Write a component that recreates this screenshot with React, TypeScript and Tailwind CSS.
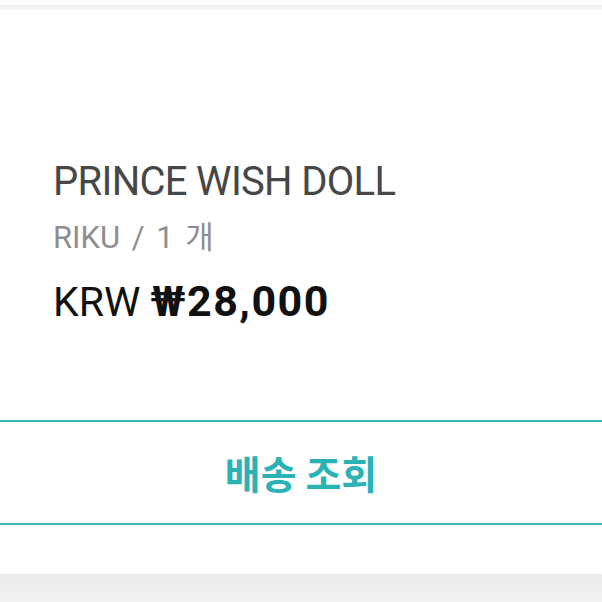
export default function App() {
  const font = { fontFamily: 'Roboto, "Noto Sans CJK KR", sans-serif' };
  return (
    <div className="w-[602px] h-[602px] flex flex-col bg-white overflow-hidden" style={font}>
      <div className="h-[5px] shrink-0 bg-[#fdfdfd]" />
      <div className="h-[5px] shrink-0 bg-gradient-to-b from-[#efeff0] to-[#f7f7f8]" />
      <div className="h-[410px] shrink-0 flex flex-col pl-[53px] pt-[148px]">
        <div className="text-[40px] leading-[48px] text-[#474747] tracking-[-0.7px]">PRINCE WISH DOLL</div>
        <div className="mt-[12px] text-[31px] leading-[40px] text-[#8e8e8e] [word-spacing:4px]">RIKU / 1 개</div>
        <div className="mt-[19px] text-[41px] leading-[48px] text-[#111]">
          KRW <span className="font-bold text-[43px] tracking-[1.5px]">₩28,000</span>
        </div>
      </div>
      <button className="h-[105px] shrink-0 border-y-2 border-[#38b7b9] flex items-center justify-center">
        <span className="text-[39px] font-bold text-[#2bb2b4]" style={{ fontFamily: '"Noto Sans CJK KR", sans-serif' }}>
          배송 조회
        </span>
      </button>
      <div className="h-[49px] shrink-0 bg-white" />
      <div className="h-[28px] shrink-0 bg-gradient-to-b from-[#e8eaeb] to-[#f1f2f3]" />
    </div>
  );
}
